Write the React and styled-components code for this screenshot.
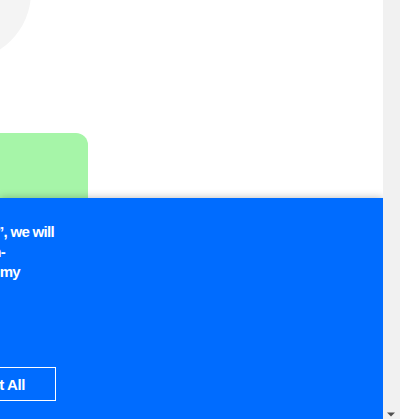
import React from 'react';
import styled, { createGlobalStyle } from 'styled-components';

const Global = createGlobalStyle`
  html, body { margin: 0; padding: 0; }
  body {
    background: #ffffff;
    font-family: "Liberation Sans", Arial, sans-serif;
    overflow: hidden;
  }
`;

const Shell = styled.div`
  display: flex;
  width: 100vw;
  height: 100vh;
  overflow: hidden;
`;

const Viewport = styled.div`
  position: relative;
  flex: 1;
  min-width: 0;
  overflow: hidden;
`;

const Page = styled.main`
  display: flex;
  flex-direction: column;
  align-items: flex-start;
  min-height: 1200px;
`;

const Blob = styled.div`
  flex-shrink: 0;
  width: 138px;
  height: 138px;
  margin: -77px 0 0 -107px;
  border-radius: 50%;
  background: #f4f4f4;
`;

const Card = styled.div`
  flex-shrink: 0;
  width: 128px;
  height: 140px;
  margin: 72px 0 0 -40px;
  border-radius: 12px;
  background: #a6f5a8;
`;

const Banner = styled.section`
  position: absolute;
  left: 0;
  right: 0;
  bottom: 0;
  height: 221px;
  box-sizing: border-box;
  padding-top: 24px;
  background: #006cff;
  box-shadow: 0 0 8px rgba(0, 0, 0, 0.28);
  color: #ffffff;
  display: flex;
  flex-direction: column;
  overflow: hidden;
`;

const Text = styled.div`
  display: flex;
  flex-direction: column;
  font-size: 15px;
  font-weight: 700;
  line-height: 20px;
  letter-spacing: -0.7px;
`;

const Line = styled.div`
  display: flex;
  justify-content: flex-end;
  width: ${p => p.$right}px;
  white-space: nowrap;
`;

const Actions = styled.div`
  display: flex;
  justify-content: flex-end;
  width: 56px;
  margin-top: 85px;
`;

const Button = styled.button`
  flex-shrink: 0;
  height: 34px;
  padding: 0 30px 0 20px;
  border: 1px solid #ffffff;
  border-radius: 0;
  background: transparent;
  color: #ffffff;
  font-family: "Liberation Sans", Arial, sans-serif;
  font-size: 15px;
  font-weight: 700;
  letter-spacing: -0.4px;
  white-space: nowrap;
`;

const Scrollbar = styled.aside`
  flex: 0 0 17px;
  display: flex;
  flex-direction: column;
  justify-content: flex-end;
  align-items: center;
  background: #f1f1f1;
`;

const ArrowDown = styled.svg`
  display: block;
  width: 17px;
  height: 17px;
`;

export default function App() {
  return (
    <>
      <Global />
      <Shell>
        <Viewport>
          <Page>
            <Blob />
            <Card />
          </Page>
          <Banner>
            <Text>
              <Line $right={54}>
                <span>By clicking “Accept All”, we will</span>
              </Line>
              <Line $right={5}>
                <span>store cookies on your device to en-</span>
              </Line>
              <Line $right={20}>
                <span>You can change this at any time in my</span>
              </Line>
            </Text>
            <Actions>
              <Button>Accept All</Button>
            </Actions>
          </Banner>
        </Viewport>
        <Scrollbar>
          <ArrowDown viewBox="0 0 17 17" aria-hidden="true">
            <path d="M4 10.5 L12 10.5 L8 14.5 Z" fill="#505050" />
          </ArrowDown>
        </Scrollbar>
      </Shell>
    </>
  );
}
